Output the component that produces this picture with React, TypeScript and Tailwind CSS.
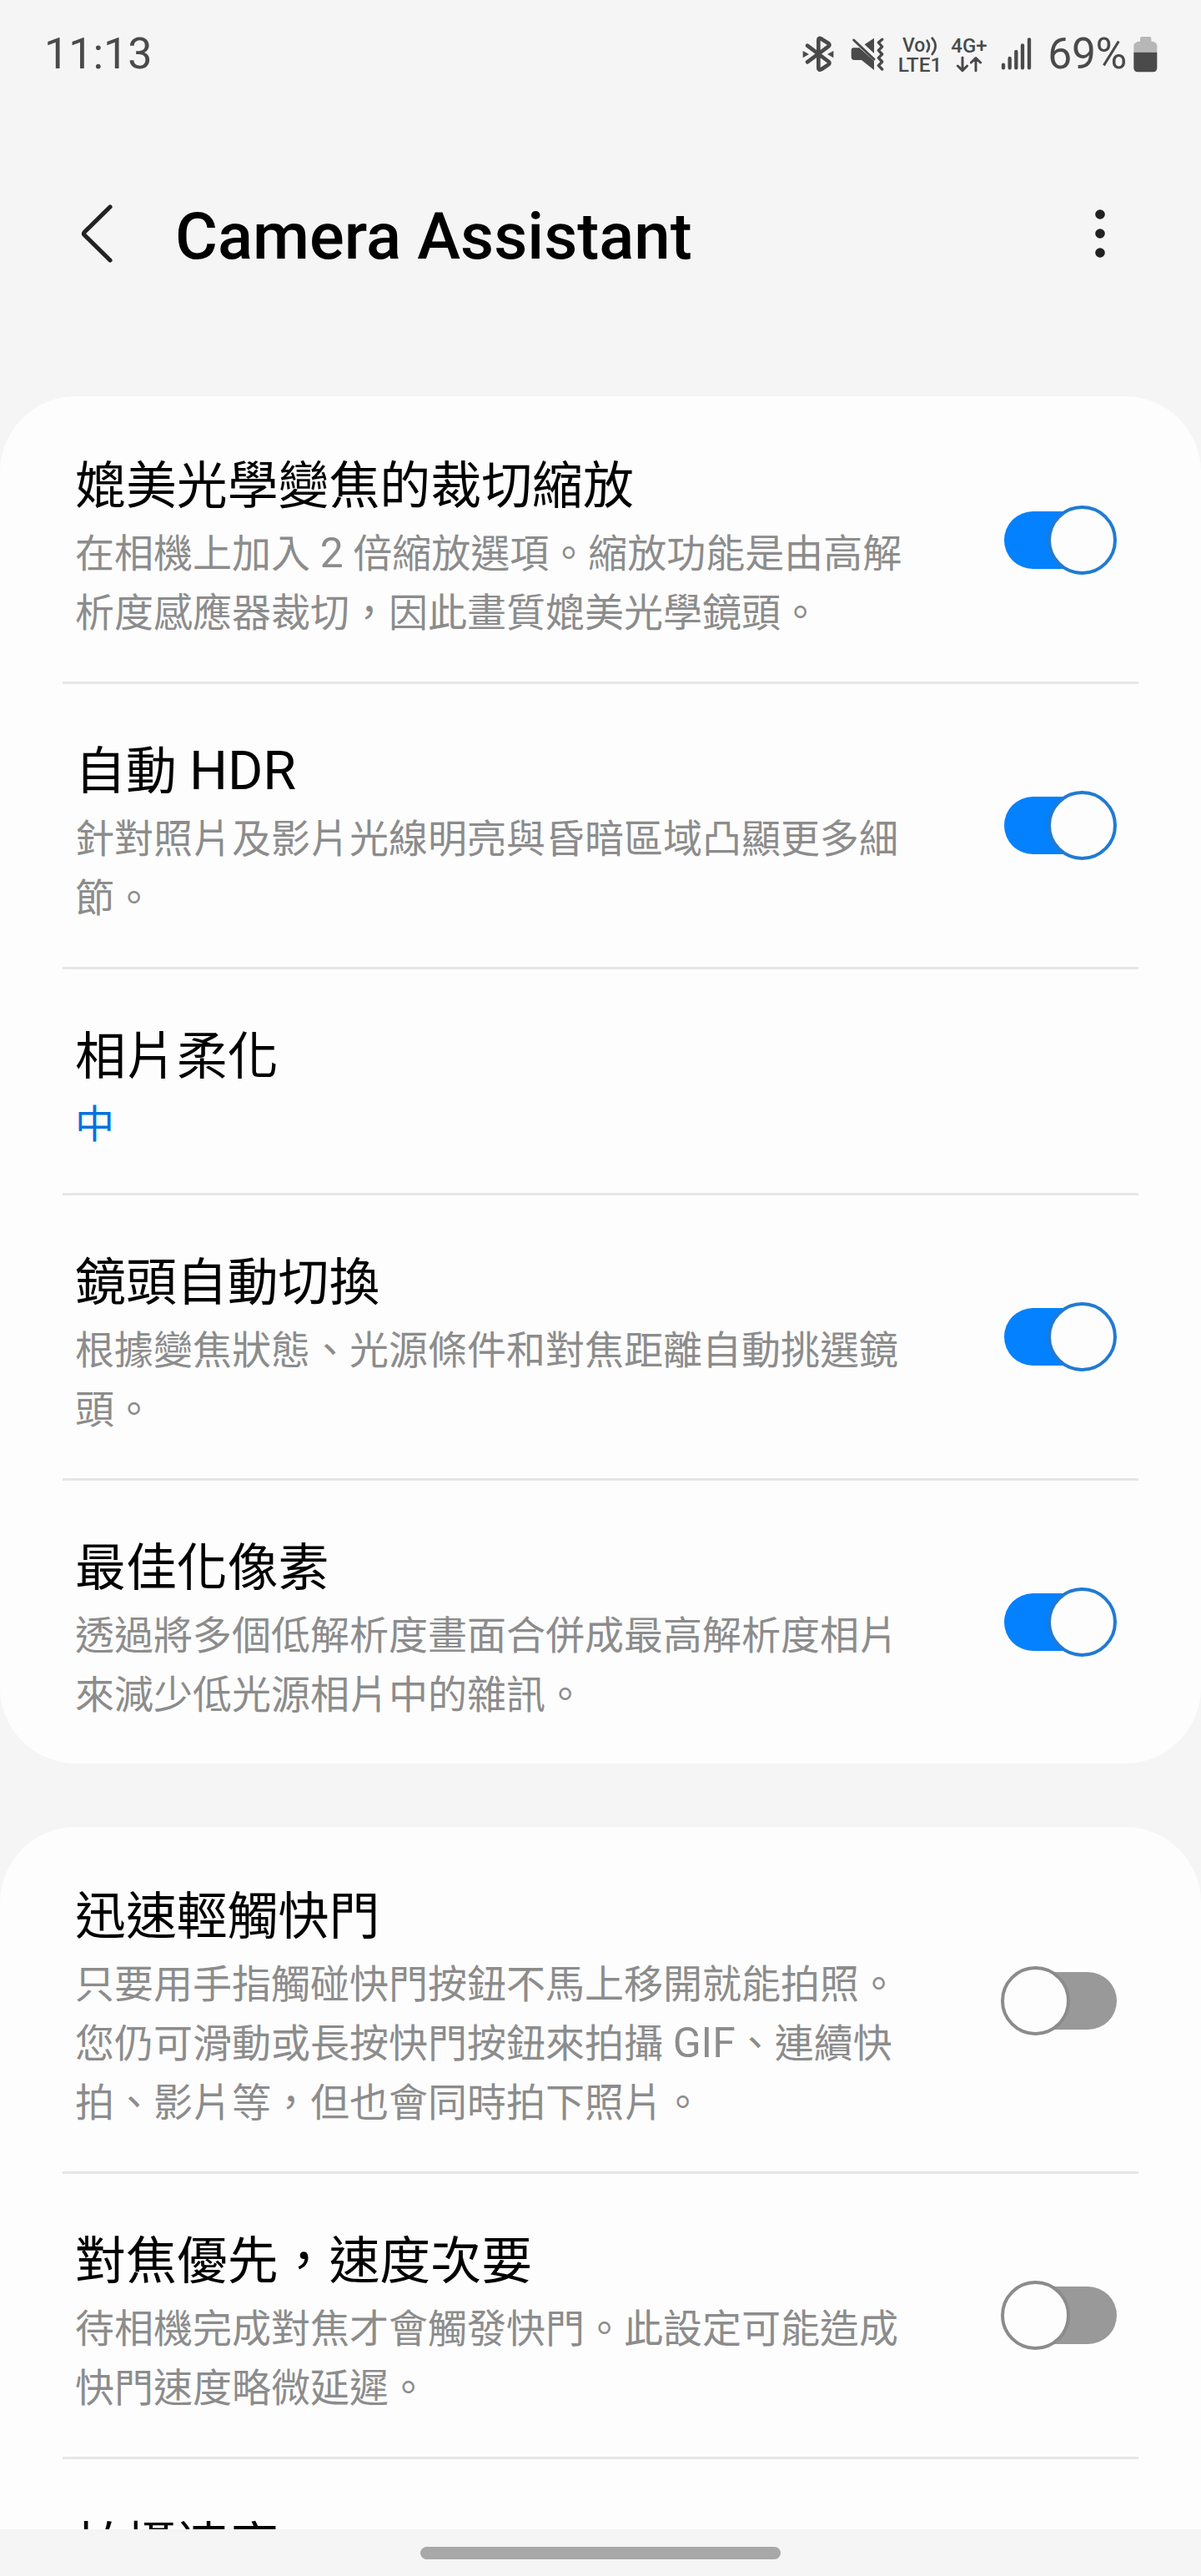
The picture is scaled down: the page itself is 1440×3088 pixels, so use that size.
import React from "react";

type Setting = {
  title: string;
  lines?: string[];
  value?: string;
  on?: boolean;
};

const zoomSettings: Setting[] = [
  {
    title: "媲美光學變焦的裁切縮放",
    lines: ["在相機上加入 2 倍縮放選項。縮放功能是由高解", "析度感應器裁切，因此畫質媲美光學鏡頭。"],
    on: true,
  },
  {
    title: "自動 HDR",
    lines: ["針對照片及影片光線明亮與昏暗區域凸顯更多細", "節。"],
    on: true,
  },
  { title: "相片柔化", value: "中" },
  {
    title: "鏡頭自動切換",
    lines: ["根據變焦狀態、光源條件和對焦距離自動挑選鏡", "頭。"],
    on: true,
  },
  {
    title: "最佳化像素",
    lines: ["透過將多個低解析度畫面合併成最高解析度相片", "來減少低光源相片中的雜訊。"],
    on: true,
  },
];

const shutterSettings: Setting[] = [
  {
    title: "迅速輕觸快門",
    lines: [
      "只要用手指觸碰快門按鈕不馬上移開就能拍照。",
      "您仍可滑動或長按快門按鈕來拍攝 GIF、連續快",
      "拍、影片等，但也會同時拍下照片。",
    ],
    on: false,
  },
  {
    title: "對焦優先，速度次要",
    lines: ["待相機完成對焦才會觸發快門。此設定可能造成", "快門速度略微延遲。"],
    on: false,
  },
  { title: "拍攝速度" },
];

function Toggle({ on }: { on: boolean }) {
  return (
    <button role="switch" aria-checked={on} className="relative flex h-[83px] w-[139px] shrink-0 items-center">
      <span className={on ? "ml-1 h-[69px] w-[131px] rounded-full bg-[#0381fe]" : "ml-2 h-[69px] w-[131px] rounded-full bg-[#999999]"} />
      <span
        className={
          on
            ? "absolute right-0 top-0 size-[83px] rounded-full border-4 border-[#217ad2] bg-[#fdfdfd]"
            : "absolute left-0 top-0 size-[83px] rounded-full border-4 border-[#8b8b8b] bg-[#fdfdfd]"
        }
      />
    </button>
  );
}

// Latin letters and digits are set slightly larger than the Chinese text
function Mixed({ text }: { text: string }) {
  return (
    <>
      {text.split(/([A-Z0-9]+)/).map((part, i) =>
        i % 2 ? (
          <span key={i} className="text-[1.06em] leading-none">
            {part}
          </span>
        ) : (
          part
        )
      )}
    </>
  );
}

function SettingRow({ item }: { item: Setting }) {
  return (
    <div className="flex items-center justify-between pl-[90px] pr-[101px]">
      <div className="pt-[62px] pb-[47px]">
        <h2 className="text-[60.9px] leading-[88px] whitespace-nowrap text-black">
          <Mixed text={item.title} />
        </h2>
        {item.lines?.map((line) => (
          <p key={line} className="h-[71px] text-[47px] leading-[71px] whitespace-nowrap text-[#8c8c8c]">
            <Mixed text={line} />
          </p>
        ))}
        {item.value && <p className="text-[47px] leading-[71px] text-[#0072de]">{item.value}</p>}
      </div>
      {item.on !== undefined && <Toggle on={item.on} />}
    </div>
  );
}

function SettingCard({ items }: { items: Setting[] }) {
  return (
    <section className="shrink-0 rounded-[91px] bg-[#fdfdfd] pt-[3px]">
      {items.map((item, i) => (
        <React.Fragment key={item.title}>
          {i > 0 && <div className="mx-[75px] h-[3px] bg-[#e6e6e6]" />}
          <SettingRow item={item} />
        </React.Fragment>
      ))}
    </section>
  );
}

function StatusBar() {
  return (
    <div className="flex h-[128px] shrink-0 items-center justify-between pt-[2px] pl-[53px] pr-[52px] text-[#4a4a4a]">
      <span className="text-[52px] leading-[60px]">11:13</span>
      <div className="flex items-center">
        {/* Bluetooth */}
        <svg className="mr-[20px] h-[44px] w-[38px]" viewBox="68 67 114 132" fill="none" stroke="currentColor">
          <path d="M86 102 L163 160 Q168 165 162 170 L137 187 Q126 193 126 183 V82 Q126 72 137 78 L162 94 Q168 99 163 104 L86 161" strokeWidth="14" strokeLinecap="round" strokeLinejoin="round" />
          <path d="M70 121 L92 133 L70 146 Z M180 121 L158 133 L180 146 Z" fill="currentColor" stroke="none" />
        </svg>
        {/* Muted, vibrating */}
        <svg className="mr-[17px] h-[44px] w-[40px]" viewBox="241 67 120 132" fill="none" stroke="currentColor">
          <path d="M250 110 H272 L325 157 V190 L280 154 H254 Q243 154 243 143 V121 Q243 110 250 110 Z" fill="currentColor" stroke="none" />
          <path d="M325 75 V130 L291 98 Z" fill="currentColor" stroke="none" />
          <path d="M252 82 L325 151" strokeWidth="9" strokeLinecap="round" />
          <path d="M354 80 L341 91 L354 106 L341 119 L354 133 L341 146 L354 160 L341 174 L354 187" strokeWidth="10" strokeLinecap="round" strokeLinejoin="round" />
        </svg>
        {/* VoLTE */}
        <svg className="mr-[11px] h-[44px] w-[52px] overflow-visible" viewBox="412 67 156 132" fill="currentColor">
          <text x="427" y="124" fontSize="71" fontWeight="500" textLength="82" lengthAdjust="spacingAndGlyphs">Vo</text>
          <path d="M516 84 Q530 103 516 123 M534 75 Q558 103 534 133" fill="none" stroke="currentColor" strokeWidth="8" strokeLinecap="round" />
          <text x="411" y="195" fontSize="73" fontWeight="500" textLength="158" lengthAdjust="spacingAndGlyphs">LTE1</text>
        </svg>
        {/* 4G+ data */}
        <svg className="mr-[16px] h-[44px] w-[44px] overflow-visible" viewBox="597 67 132 132" fill="none" stroke="currentColor">
          <text x="598" y="126" fontSize="71" fontWeight="500" fill="currentColor" stroke="none" textLength="130" lengthAdjust="spacingAndGlyphs">4G+</text>
          <path d="M639 145 V192 M622 175 L639 192 L656 175 M687 192 V147 M670 163 L687 147 L704 163" strokeWidth="9" strokeLinecap="round" strokeLinejoin="round" />
        </svg>
        {/* Signal */}
        <svg className="mr-[18px] h-[44px] w-[38px]" viewBox="777 67 114 132" stroke="currentColor" strokeWidth="13" strokeLinecap="round">
          <path d="M786 171 V182 M809 148 V182 M832 124 V182 M855 101 V182 M879 80 V182" />
        </svg>
        <span className="mr-[8px] text-[51.5px] leading-[60px] tracking-[-0.3px]">69%</span>
        {/* Battery */}
        <svg className="h-[44px] w-[29px]" viewBox="1256 67 87 132">
          <path d="M1280 87 V76 Q1280 70 1286 70 H1314 Q1320 70 1320 76 V87 Q1341 87 1341 104 V126 H1257 V104 Q1257 87 1280 87 Z" fill="#b7b7b7" />
          <path d="M1257 126 H1341 V182 Q1341 197 1326 197 H1272 Q1257 197 1257 182 Z" fill="currentColor" />
        </svg>
      </div>
    </div>
  );
}

export default function App() {
  return (
    <div className="flex h-[3088px] w-[1440px] flex-col overflow-hidden bg-[#f5f5f5] font-[Roboto,'Noto_Sans_CJK_TC',sans-serif]">
      <StatusBar />
      <header className="flex h-[347px] shrink-0 items-start pl-[97px] pr-[113px] pt-[92px]">
        <svg className="mt-[24px] h-[72px] w-[40px] shrink-0" viewBox="97 244 40 72" fill="none" stroke="#222222" strokeWidth="5.2" strokeLinecap="round" strokeLinejoin="round">
          <path d="M132 248 L101.500 278 Q99.500 280 101.500 282 L132 312" />
        </svg>
        <h1 className="ml-[73px] grow text-[78px] leading-[128px] font-medium whitespace-nowrap text-black">Camera Assistant</h1>
        <svg className="mt-[30px] h-[60px] w-[16px] shrink-0" viewBox="0 0 16 60" fill="#222222">
          <circle cx="8" cy="7" r="5.8" />
          <circle cx="8" cy="30" r="5.8" />
          <circle cx="8" cy="53" r="5.8" />
        </svg>
      </header>
      <main className="flex min-h-0 grow flex-col gap-[76px] overflow-hidden">
        <SettingCard items={zoomSettings} />
        <SettingCard items={shutterSettings} />
      </main>
      <footer className="flex h-[56px] shrink-0 items-start justify-center bg-[#f5f5f5] pt-[21px]">
        <div className="h-[15px] w-[432px] rounded-full bg-[#a8a8a8]" />
      </footer>
    </div>
  );
}
